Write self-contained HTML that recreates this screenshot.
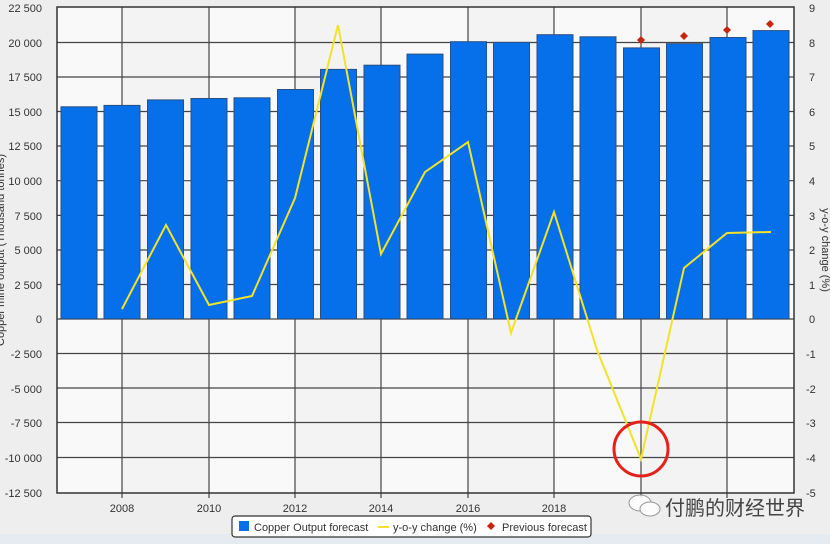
<!DOCTYPE html>
<html><head><meta charset="utf-8"><style>
html,body{margin:0;padding:0;width:830px;height:544px;overflow:hidden;background:#eeeeee;}
svg{display:block;font-family:"Liberation Sans",Arial,sans-serif;}
</style></head><body>
<svg width="830" height="544" viewBox="0 0 830 544">
<rect x="0" y="0" width="830" height="544" fill="#eeeeee"/>
<rect x="0" y="534" width="830" height="10" fill="#e6ebf1"/>
<rect x="57" y="7" width="737" height="486" fill="#f9f9f9"/>
<rect x="122" y="7" width="87" height="486" fill="#f3f3f3"/>
<rect x="295" y="7" width="86" height="486" fill="#f3f3f3"/>
<rect x="468" y="7" width="86" height="486" fill="#f3f3f3"/>
<rect x="641" y="7" width="86" height="486" fill="#f3f3f3"/>
<g stroke="#444" stroke-width="1.2">
<line x1="57" x2="794" y1="42.5" y2="42.5"/><line x1="57" x2="794" y1="77" y2="77"/>
<line x1="57" x2="794" y1="111.5" y2="111.5"/><line x1="57" x2="794" y1="146" y2="146"/>
<line x1="57" x2="794" y1="180.7" y2="180.7"/><line x1="57" x2="794" y1="215.4" y2="215.4"/>
<line x1="57" x2="794" y1="250" y2="250"/><line x1="57" x2="794" y1="284.5" y2="284.5"/>
<line x1="57" x2="794" y1="319" y2="319"/><line x1="57" x2="794" y1="353.5" y2="353.5"/>
<line x1="57" x2="794" y1="388" y2="388"/><line x1="57" x2="794" y1="422.5" y2="422.5"/>
<line x1="57" x2="794" y1="457.5" y2="457.5"/>
<line x1="122" x2="122" y1="7" y2="498"/><line x1="209" x2="209" y1="7" y2="498"/>
<line x1="295" x2="295" y1="7" y2="498"/><line x1="381" x2="381" y1="7" y2="498"/>
<line x1="468" x2="468" y1="7" y2="498"/><line x1="554" x2="554" y1="7" y2="498"/>
<line x1="641" x2="641" y1="7" y2="498"/><line x1="727" x2="727" y1="7" y2="498"/>
</g>
<rect x="57" y="7" width="737" height="486" fill="none" stroke="#333" stroke-width="1.5"/>
<g fill="#0670eb" stroke="#2a4f80" stroke-width="1">
<rect x="61" y="106.8" width="36" height="212"/>
<rect x="104" y="105.4" width="36" height="213.4"/>
<rect x="147.5" y="99.9" width="36" height="218.9"/>
<rect x="191" y="98.5" width="36" height="220.3"/>
<rect x="234" y="97.8" width="36" height="221"/>
<rect x="277.5" y="89.5" width="36" height="229.3"/>
<rect x="320.5" y="69.4" width="36" height="249.4"/>
<rect x="364" y="65.2" width="36" height="253.6"/>
<rect x="407" y="54.1" width="36" height="264.7"/>
<rect x="450.5" y="41.7" width="36" height="277.1"/>
<rect x="493.5" y="42.4" width="36" height="276.4"/>
<rect x="537" y="34.7" width="36" height="284.1"/>
<rect x="580" y="36.8" width="36" height="282"/>
<rect x="623.5" y="47.9" width="36" height="270.9"/>
<rect x="666.5" y="43.7" width="36" height="275.1"/>
<rect x="710" y="37.5" width="36" height="281.3"/>
<rect x="753" y="30.6" width="36" height="288.2"/>
</g>
<polyline fill="none" stroke="#f2e22a" stroke-width="2" points="122,309 166,225 209,305 252,296 295,198 338,25 381,254 425,172 468,142 511,333 554,212 597,350 641,459 684,268 727,233 771,232"/>
<g fill="#c8250f">
<path d="M641,36 l4,4 l-4,4 l-4,-4z"/>
<path d="M684,32 l4,4 l-4,4 l-4,-4z"/>
<path d="M727,26 l4,4 l-4,4 l-4,-4z"/>
<path d="M770,20 l4,4 l-4,4 l-4,-4z"/>
</g>
<circle cx="641" cy="449" r="27" fill="none" stroke="#e4221a" stroke-width="3"/>
<g font-size="11" fill="#333" text-anchor="end">
<text x="42" y="12">22 500</text><text x="42" y="47">20 000</text><text x="42" y="81">17 500</text>
<text x="42" y="116">15 000</text><text x="42" y="150">12 500</text><text x="42" y="185">10 000</text>
<text x="42" y="220">7 500</text><text x="42" y="254">5 000</text><text x="42" y="289">2 500</text>
<text x="42" y="323">0</text><text x="42" y="358">-2 500</text><text x="42" y="393">-5 000</text>
<text x="42" y="427">-7 500</text><text x="42" y="462">-10 000</text><text x="42" y="497">-12 500</text>
</g>
<text transform="translate(4,250) rotate(-90)" font-size="11" fill="#333" text-anchor="middle">Copper mine output (Thousand tonnes)</text>
<g font-size="11" fill="#333">
<text x="809" y="12">9</text><text x="809" y="47">8</text><text x="809" y="81">7</text>
<text x="809" y="116">6</text><text x="809" y="150">5</text><text x="809" y="185">4</text>
<text x="809" y="220">3</text><text x="809" y="254">2</text><text x="809" y="289">1</text>
<text x="809" y="323">0</text><text x="806" y="358">-1</text><text x="806" y="393">-2</text>
<text x="806" y="427">-3</text><text x="806" y="462">-4</text><text x="806" y="497">-5</text>
</g>
<text transform="translate(822,250) rotate(90)" font-size="11" fill="#333" text-anchor="middle">y-o-y change (%)</text>
<g font-size="11" fill="#333" text-anchor="middle">
<text x="122" y="512">2008</text><text x="209" y="512">2010</text><text x="295" y="512">2012</text>
<text x="381" y="512">2014</text><text x="468" y="512">2016</text><text x="554" y="512">2018</text>
</g>
<rect x="232" y="516" width="359" height="21" rx="3" fill="#fff" stroke="#333" stroke-width="1.2"/>
<rect x="239" y="521" width="10" height="10" fill="#0670eb"/>
<text x="254" y="531" font-size="11" fill="#333">Copper Output forecast</text>
<line x1="378" x2="389" y1="527" y2="527" stroke="#f2e22a" stroke-width="2"/>
<text x="393" y="531" font-size="11" fill="#333">y-o-y change (%)</text>
<path d="M491,522 l4,4 l-4,4 l-4,-4z" fill="#c8250f"/>
<text x="502" y="531" font-size="11" fill="#333">Previous forecast</text>
<g opacity="0.85">
<ellipse cx="640" cy="503" rx="11" ry="8" fill="#fff" stroke="#888"/>
<ellipse cx="650" cy="509" rx="10" ry="7" fill="#fff" stroke="#888"/>
</g>
<text x="665" y="515" font-size="20" fill="#444" font-family="'Noto Sans CJK SC',sans-serif">付鹏的财经世界</text>
</svg>
</body></html>
